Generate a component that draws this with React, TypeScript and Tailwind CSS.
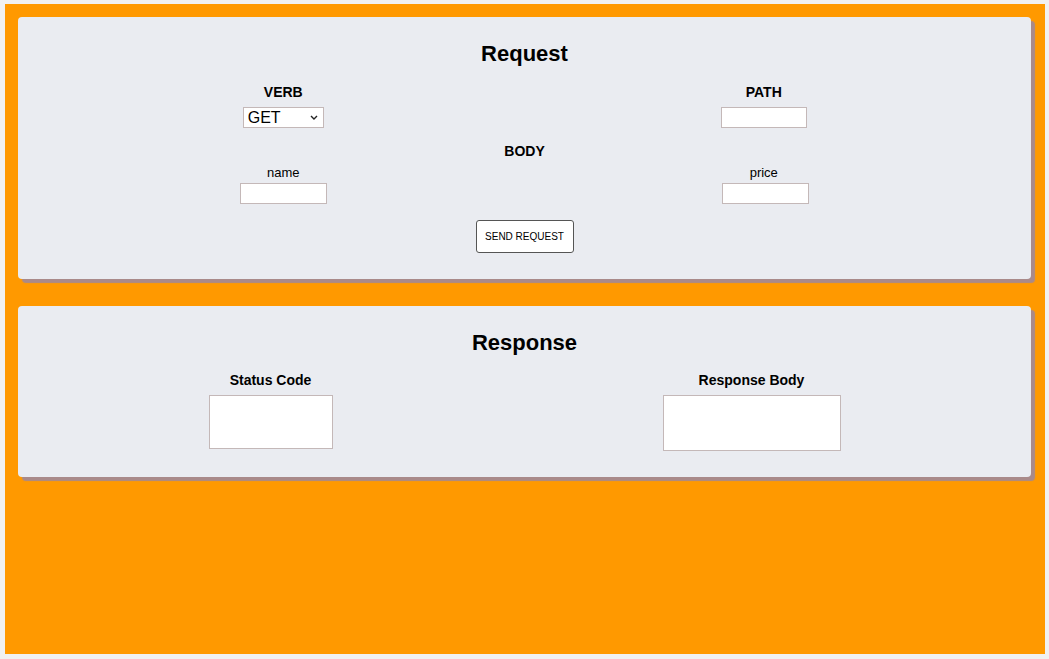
import { useState } from "react";

const field =
  "bg-white border border-[#c4b8b8] outline-none text-[13px] text-black";

function Card({ children }: { children: React.ReactNode }) {
  return (
    <section className="bg-[#eaecf1] rounded-[4px] shadow-[4px_4px_1px_#a98a8a]">
      {children}
    </section>
  );
}

export default function App() {
  const [verb, setVerb] = useState("GET");
  const [path, setPath] = useState("");
  const [name, setName] = useState("");
  const [price, setPrice] = useState("");

  return (
    <div
      className="h-[659px] w-full bg-[#f1f1f1] pt-[4px] pl-[5px] pr-[4px] pb-[5px] text-black"
      style={{ fontFamily: '"Liberation Sans", Arial, sans-serif' }}
    >
      <div className="h-full bg-[#ff9900] pt-[13px] pl-[13px] pr-[14px]">
        <Card>
          <div className="pt-[23px] pb-[26px]">
            <h1 className="text-center text-[22px] leading-[28px] font-bold">
              Request
            </h1>

            <div className="grid grid-cols-2 pl-[25px] pr-[27px] mt-[16px]">
              <div className="flex flex-col items-center">
                <label className="text-[14px] leading-[16px] font-bold">VERB</label>
                <div className="relative flex mt-[7px]">
                  <select
                    value={verb}
                    onChange={(e) => setVerb(e.target.value)}
                    className="appearance-none block w-[81px] h-[21px] bg-white border border-[#c4b8b8] pl-[4px] text-[16px] leading-[19px] outline-none"
                  >
                    <option>GET</option>
                    <option>POST</option>
                    <option>PUT</option>
                    <option>DELETE</option>
                  </select>
                  <svg
                    className="absolute right-[6px] top-[8px] pointer-events-none"
                    width="8"
                    height="5"
                    viewBox="0 0 8 5"
                  >
                    <path d="M1 1 L4 4 L7 1" fill="none" stroke="#222" strokeWidth="1.4" />
                  </svg>
                </div>
              </div>
              <div className="flex flex-col items-center">
                <label className="text-[14px] leading-[16px] font-bold">PATH</label>
                <input
                  value={path}
                  onChange={(e) => setPath(e.target.value)}
                  className={`${field} mt-[7px] w-[86px] h-[21px] px-1`}
                />
              </div>
            </div>

            <p className="text-center text-[14px] leading-[16px] font-bold mt-[15px]">
              BODY
            </p>

            <div className="grid grid-cols-2 pl-[25px] pr-[27px] mt-[6px]">
              <div className="flex flex-col items-center">
                <label className="text-[13px] leading-[16px]">name</label>
                <input
                  value={name}
                  onChange={(e) => setName(e.target.value)}
                  className={`${field} mt-[2px] w-[87px] h-[21px] px-1`}
                />
              </div>
              <div className="flex flex-col items-center">
                <label className="text-[13px] leading-[16px]">price</label>
                <input
                  value={price}
                  onChange={(e) => setPrice(e.target.value)}
                  className={`${field} mt-[2px] w-[87px] h-[21px] px-1 ml-[3px]`}
                />
              </div>
            </div>

            <div className="flex justify-center mt-[16px]">
              <button className="w-[98px] h-[33px] bg-white border border-[#555] rounded-[3px] text-[10px] leading-none uppercase">
                Send Request
              </button>
            </div>
          </div>
        </Card>

        <div className="mt-[27px]">
          <Card>
            <div className="pt-[23px] pb-[26px]">
              <h1 className="text-center text-[22px] leading-[28px] font-bold">
                Response
              </h1>
              <div className="grid grid-cols-2 items-start pl-[12px] pr-[39px] mt-[15px]">
                <div className="flex flex-col items-center">
                  <span className="text-[14px] leading-[16px] font-bold">Status Code</span>
                  <div className="mt-[7px] w-[124px] h-[54px] bg-white border border-[#c4b8b8]" />
                </div>
                <div className="flex flex-col items-center">
                  <span className="text-[14px] leading-[16px] font-bold">Response Body</span>
                  <div className="mt-[7px] w-[178px] h-[56px] bg-white border border-[#c4b8b8]" />
                </div>
              </div>
            </div>
          </Card>
        </div>
      </div>
    </div>
  );
}
